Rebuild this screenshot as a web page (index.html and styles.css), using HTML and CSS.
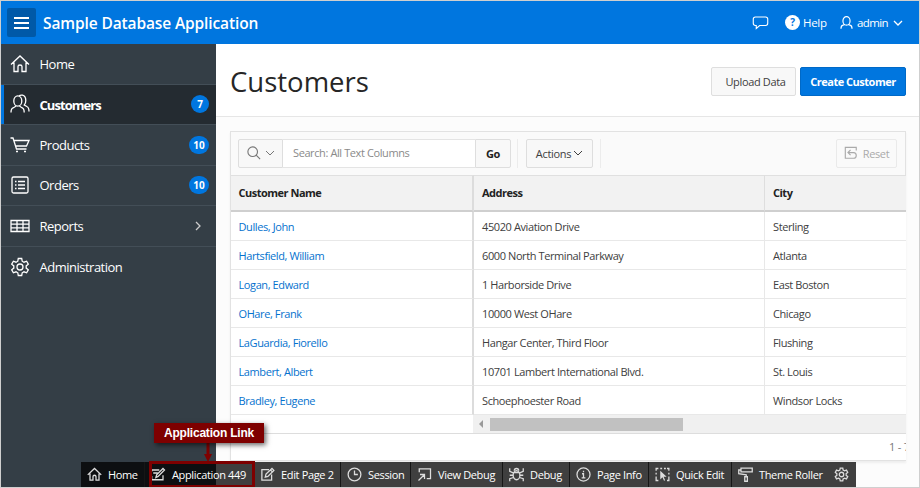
FILE: index.html
```
<!DOCTYPE html>
<html lang="en">
<head>
<meta charset="utf-8">
<title>Sample Database Application</title>
<link rel="stylesheet" href="styles.css">
</head>
<body>
<svg class="defs" aria-hidden="true">
  <symbol id="home" viewBox="0 0 20 20"><path d="M1 10.500 10 2l9 8.500M4 8.500V17.500h4V12.500q0-1.500 2-1.500t2 1.500v5h4V8.500"/></symbol>
  <symbol id="users" viewBox="0 0 20 20"><ellipse cx="7.800" cy="7" rx="4" ry="5.200"/><path d="M1 18.500q0-4 2.500-4.800L6.200 12M9.400 12l2.500 1.700q2.300.8 2.300 4.800M9 1.800q1.500-1 3.500-.6 3.300.8 3.300 5.300 0 2.700-1.500 4.500l2.500 1.500q2.200.8 2.200 5"/></symbol>
  <symbol id="user" viewBox="0 0 20 20"><ellipse cx="10" cy="7.500" rx="5.500" ry="6.500"/><path d="M1.500 19.500q0-4.500 3-5.400L7.500 13M12.500 13l3 1.100q3 .9 3 5.400"/></symbol>
  <symbol id="cart" viewBox="0 0 20 20"><path d="M.5 3H3l3.500 11h10M3.700 5.500H19L16.500 11H5.700"/><path d="M6 16.500h2M14 16.500h2"/></symbol>
  <symbol id="list" viewBox="0 0 20 20"><rect x="2" y="2" width="16" height="16" rx="1.500"/><path d="M5 6.500h1.500M8 6.500h7M5 10h1.500M8 10h7M5 13.500h1.500M8 13.500h7"/></symbol>
  <symbol id="table" viewBox="0 0 20 20"><path d="M1 4.500h18v11H1zM1 8.200h18M1 11.800h18M7 4.500v11M13 4.500v11"/></symbol>
  <symbol id="gear" viewBox="0 0 20 20"><path d="M8.300 1.500h3.400l.5 2.700 1.800 1 2.600-1 1.700 3-2.100 1.700v2.200l2.100 1.700-1.700 3-2.600-1-1.800 1-.5 2.700H8.300l-.5-2.700-1.800-1-2.600 1-1.700-3 2.100-1.700V8.900L1.700 7.200l1.700-3 2.600 1 1.800-1z"/><circle cx="10" cy="10" r="3"/></symbol>
  <symbol id="down" viewBox="0 0 10 10"><path d="m1 3 4 4 4-4"/></symbol>
  <symbol id="right" viewBox="0 0 10 10"><path d="m3 1 4 4-4 4"/></symbol>
  <symbol id="chat" viewBox="0 0 20 20"><path d="M4 3.500h12q2.500 0 2.500 2.500v5q0 2.500-2.500 2.500H9L5 17v-3.500H4Q1.500 13.500 1.500 11V6Q1.500 3.500 4 3.500z"/></symbol>
  <symbol id="search" viewBox="0 0 16 16"><circle cx="6.500" cy="6.500" r="5.500"/><path d="m10.500 10.500 4.500 4.500"/></symbol>
  <symbol id="reset" viewBox="0 0 16 16"><path d="M14 5V1.500H1.500V14H11q3 0 3-3.200T11 7.500H4.500M7.500 4.500l-3 3 3 3"/></symbol>
  <symbol id="appedit" viewBox="0 0 20 20"><path d="M1 4h10M1 4v2M3 8h6M1 12v5h15v-6M6.500 14l1-3.500L16 2l2 2-8.500 8.500z"/></symbol>
  <symbol id="edit" viewBox="0 0 20 20"><path d="M12 3.500H2.500v14h13V10M7 13.500l1-4 8-7.500 2.500 2.500-8 8zM14 4l2.500 2.500"/></symbol>
  <symbol id="clock" viewBox="0 0 20 20"><circle cx="10" cy="10" r="8.500"/><path d="M10 4.500V10h4.500"/></symbol>
  <symbol id="viewdebug" viewBox="0 0 20 20"><path d="M3 7V2.500h15v13h-5M4 10h6v6M10 10l-8 8"/></symbol>
  <symbol id="bug" viewBox="0 0 20 20"><ellipse cx="10" cy="11" rx="4.500" ry="6"/><path d="M6 7.500h8M7 5q0-3 3-3t3 3M1 1.500v4.300l4.700 2M19 1.500v4.300l-4.700 2M1 11h4.500M14.500 11H19M1 19v-3.500l5-1.500M19 19v-3.500L14 14"/></symbol>
  <symbol id="info" viewBox="0 0 20 20"><circle cx="10" cy="10" r="8.700"/><path d="M8 9h2v5M7.500 14.500h5M10 5v2"/></symbol>
  <symbol id="quick" viewBox="0 0 20 20"><path d="M1.500 5V2h3M7 2h2.500M12 2h2.500M16 2h2.500v3M18.500 7.500V10M18.500 12.500v5.500H16M1.500 7.500V10M1.500 12.500v5.500h3"/><path class="solid" d="m7 5 8.500 8h-4l2 4.500-1.500.7-2-4.500-3 2.800z"/></symbol>
  <symbol id="roller" viewBox="0 0 20 20"><path d="M4 1.500h15v5H4zM4 4H1v5l10 1.500V13M9 13h3.500v6H9z"/></symbol>
</svg>

<div class="app">
  <header class="topbar">
    <button class="menu" aria-label="Menu"><i></i><i></i><i></i></button>
    <span class="brand">Sample Database Application</span>
    <nav class="tools">
      <svg class="ico chat"><use href="#chat"/></svg>
      <span class="help"><b>?</b>Help</span>
      <span class="account"><svg class="ico"><use href="#user"/></svg><span>admin</span><svg class="caret"><use href="#down"/></svg></span>
    </nav>
  </header>
  <div class="body">
    <nav class="side">
      <a class="item"><svg class="ico"><use href="#home"/></svg><span>Home</span></a>
      <a class="item current"><svg class="ico"><use href="#users"/></svg><span>Customers</span><em class="round">7</em></a>
      <a class="item"><svg class="ico"><use href="#cart"/></svg><span>Products</span><em>10</em></a>
      <a class="item"><svg class="ico"><use href="#list"/></svg><span>Orders</span><em>10</em></a>
      <a class="item"><svg class="ico"><use href="#table"/></svg><span>Reports</span><svg class="caret"><use href="#right"/></svg></a>
      <a class="item"><svg class="ico"><use href="#gear"/></svg><span>Administration</span></a>
    </nav>
    <main class="main">
      <div class="title">
        <h1>Customers</h1>
        <button class="btn upload">Upload Data</button>
        <button class="btn primary">Create Customer</button>
      </div>
      <section class="report">
        <div class="controls">
          <button class="btn find"><svg class="glass"><use href="#search"/></svg><svg class="caret"><use href="#down"/></svg></button>
          <div class="field">Search: All Text Columns</div>
          <button class="btn go">Go</button>
          <div class="group"><button class="btn actions"><span>Actions</span><svg class="caret"><use href="#down"/></svg></button></div>
          <button class="btn reset"><svg class="back"><use href="#reset"/></svg><span>Reset</span></button>
        </div>
        <table class="grid">
          <colgroup><col class="c1"><col class="c2"><col class="c3"></colgroup>
          <thead><tr><th>Customer Name</th><th>Address</th><th>City</th></tr></thead>
          <tbody>
            <tr><td><a>Dulles, John</a></td><td>45020 Aviation Drive</td><td>Sterling</td></tr>
            <tr><td><a>Hartsfield, William</a></td><td>6000 North Terminal Parkway</td><td>Atlanta</td></tr>
            <tr><td><a>Logan, Edward</a></td><td>1 Harborside Drive</td><td>East Boston</td></tr>
            <tr><td><a>OHare, Frank</a></td><td>10000 West OHare</td><td>Chicago</td></tr>
            <tr><td><a>LaGuardia, Fiorello</a></td><td>Hangar Center, Third Floor</td><td>Flushing</td></tr>
            <tr><td><a>Lambert, Albert</a></td><td>10701 Lambert International Blvd.</td><td>St. Louis</td></tr>
            <tr><td><a>Bradley, Eugene</a></td><td>Schoephoester Road</td><td>Windsor Locks</td></tr>
          </tbody>
        </table>
        <div class="scroll"><div class="track"><i class="arrow"></i><i class="thumb"></i></div></div>
        <div class="pager"><span>1 - 7</span></div>
      </section>
    </main>
  </div>
  <footer class="devbar">
    <a class="d1"><svg class="ico"><use href="#home"/></svg><span>Home</span></a>
    <a class="d2"><svg class="ico"><use href="#appedit"/></svg><span>Application 449</span></a>
    <a class="d3"><svg class="ico"><use href="#edit"/></svg><span>Edit Page 2</span></a>
    <a class="d4"><svg class="ico"><use href="#clock"/></svg><span>Session</span></a>
    <a class="d5"><svg class="ico"><use href="#viewdebug"/></svg><span>View Debug</span></a>
    <a class="d6"><svg class="ico"><use href="#bug"/></svg><span>Debug</span></a>
    <a class="d7"><svg class="ico"><use href="#info"/></svg><span>Page Info</span></a>
    <a class="d8"><svg class="ico"><use href="#quick"/></svg><span>Quick Edit</span></a>
    <a class="d9"><svg class="ico"><use href="#roller"/></svg><span>Theme Roller</span></a>
    <a class="d10"><svg class="ico"><use href="#gear"/></svg></a>
  </footer>
  <div class="outline"></div>
  <svg class="pointer" viewBox="0 0 10 19"><path d="M3.500 0h3v11H9L5 19 1 11h2.500z"/></svg>
  <div class="callout">Application Link</div>
</div>
</body>
</html>
```
FILE: styles.css
```
* { box-sizing: border-box; }
body { margin: 0; font: 11px "Open Sans", "Noto Sans", sans-serif; color: #404040; letter-spacing: -.4px; }
button { font: inherit; letter-spacing: inherit; color: inherit; padding: 0; }
svg { fill: none; stroke: currentColor; stroke-width: 1.3; flex: none; }
.solid { fill: currentColor; stroke: none; }
.defs { position: absolute; width: 0; height: 0; }
.app { position: relative; width: 920px; height: 488px; overflow: hidden; border: 1px solid #cfcfcf; display: flex; flex-direction: column; background: #fcfcfc; }
.ico { width: 20px; height: 20px; }
.caret { width: 10px; height: 10px; }

.topbar { height: 43px; flex: none; background: #0076df; color: #fff; display: flex; align-items: center; padding: 0 16px 0 6px; }
.menu { width: 29px; height: 29px; border: 0; border-radius: 2px; background: #0059a8; display: flex; flex-direction: column; align-items: center; justify-content: center; gap: 3px; }
.menu i { width: 15px; height: 2px; background: #fff; }
.brand { margin-left: 7px; font-size: 15.500px; font-weight: 600; letter-spacing: -.12px; white-space: nowrap; }
.tools { margin-left: auto; display: flex; align-items: center; font-size: 11.500px; letter-spacing: -.6px; }
.chat { width: 17px; height: 17px; margin-right: 16px; }
.help { display: flex; align-items: center; width: 55px; letter-spacing: -.3px; }
.help b { width: 15px; height: 15px; border-radius: 50%; background: #fff; color: #0076df; font-size: 10px; line-height: 15px; text-align: center; margin-right: 3px; }
.account { display: flex; align-items: center; }
.account .ico { width: 13px; height: 13px; stroke-width: 1.800; margin-right: 4px; }
.account .caret { margin-left: 5px; }

.body { flex: 1; display: flex; min-height: 0; }
.side { width: 215px; flex: none; background: #343e46; color: #fff; font-size: 13px; display: flex; flex-direction: column; }
.item { height: 40.500px; flex: none; border-bottom: 1px solid #434e57; display: flex; align-items: center; padding: 0 7px 0 9px; }
.item:last-child { border-bottom: 0; }
.item > span { margin-left: 9.500px; margin-right: auto; letter-spacing: -.5px; }
.item.current { background: #242b31; font-weight: 700; box-shadow: inset 3px 0 #0076df; }
.item.current > span { letter-spacing: -.95px; padding-top: 1px; }
.item em { font-style: normal; font-size: 10px; font-weight: 700; letter-spacing: 0; background: #0076df; width: 20px; height: 18px; line-height: 18px; border-radius: 9px; text-align: center; }
.item em.round { width: 18px; }
.item .caret { margin-right: 6px; color: #ccc; }

.main { flex: 1; min-width: 0; }
.title { height: 73px; background: #fff; border-bottom: 1px solid #e6e6e6; display: flex; align-items: center; padding: 3px 13px 0 14px; }
h1 { margin: 0 auto 0 0; font-size: 27.500px; font-weight: 400; line-height: 40px; color: #262626; letter-spacing: 0; }
.btn { border: 1px solid #dedede; border-radius: 2px; background: #f8f8f8; height: 29px; display: flex; align-items: center; justify-content: center; }
.upload { width: 85px; margin-right: 4px; padding-left: 4px; letter-spacing: -.35px; }
.primary { width: 106px; background: #0076df; border-color: #0069c7; color: #fff; font-weight: 700; letter-spacing: -.5px; }

.report { width: 676px; height: 330px; margin: 14px 0 0 14px; background: #fff; border: 1px solid #e2e2e2; border-right: 0; overflow: hidden; box-shadow: 0 2px 2px #eee; }
.controls { height: 43px; background: #fafafa; border-right: 1px solid #e2e2e2; padding: 0 8px 0 7px; display: flex; align-items: center; }
.controls .btn { padding-bottom: 1px; }
.find { width: 45px; gap: 4px; color: #777; border-radius: 2px 0 0 2px; }
.glass { width: 14px; height: 14px; }
.field { width: 192px; height: 29px; line-height: 26px; border: 1px solid #e4e4e4; border-width: 1px 0; background: #fff; padding-left: 10px; color: #8a8a8a; }
.go { width: 36px; font-weight: 700; border-radius: 0 2px 2px 0; color: #222; }
.group { height: 29px; margin-left: 6px; padding: 0 7px 0 8px; border: solid #ececec; border-width: 0 1px; }
.actions { width: 67px; gap: 2px; letter-spacing: -.3px; }
.actions .caret, .find .caret { stroke-width: 1; }
.reset { width: 61px; margin-left: auto; gap: 5px; color: #aaa; border-color: #eaeaea; background: #fafafa; }
.back { width: 14px; height: 14px; }

.grid { width: 675px; table-layout: fixed; border-collapse: separate; border-spacing: 0; }
.c1 { width: 243px; }
.c2 { width: 291px; }
.grid th { height: 37px; padding: 0 8px 2px; text-align: left; background: #f2f2f2; color: #222; letter-spacing: -.5px; border-top: 1px solid #e0e0e0; border-bottom: 2px solid #cfcfcf; border-right: 1px solid #dedede; }
.grid td { height: 29px; padding: 1px 8px 0; border-bottom: 1px solid #e8e8e8; border-right: 1px solid #e8e8e8; }
.grid th:first-child, .grid td:first-child { border-right: 2px solid #dcdcdc; padding-left: 7.500px; }
.grid th:last-child, .grid td:last-child { border-right: 0; }
.grid a { color: #0572ce; }
.scroll { height: 19px; border-bottom: 1px solid #ddd; display: flex; justify-content: flex-end; }
.track { width: 433px; background: #f0f0f0; display: flex; align-items: center; }
.arrow { margin: 0 7px 0 6px; border: solid transparent; border-width: 4px 4px 4px 0; border-right-color: #999; }
.thumb { width: 193px; height: 13px; background: #c1c1c1; }
.pager { padding: 5px 0 0 658px; white-space: nowrap; color: #777; letter-spacing: -.2px; }

.devbar { position: absolute; left: 80px; bottom: 0; height: 25px; display: flex; background: rgba(0, 0, 0, .75); color: #fff; letter-spacing: -.35px; }
.devbar a { display: flex; align-items: center; padding-left: 6px; border-right: 1px solid #161616; white-space: nowrap; }
.devbar .ico { width: 15px; height: 15px; stroke-width: 1.700; color: #ddd; margin-right: 6px; }
.devbar .d9, .devbar .d10 { border: 0; }
.d1 { width: 64px; } .d2 { width: 109px; } .d3 { width: 87px; } .d4 { width: 70px; }
.d5 { width: 92px; } .d6 { width: 67px; } .d7 { width: 79px; } .d8 { width: 83px; }
.d9 { width: 96px; } .d10 { width: 28px; }

.outline { position: absolute; left: 148px; top: 460px; width: 106px; height: 27px; border: 3px solid #7e0000; }
.pointer { position: absolute; left: 202px; top: 442px; width: 10px; height: 19px; fill: #7e0000; stroke: none; }
.callout { position: absolute; left: 153px; top: 422px; width: 110px; height: 20px; background: #7e0000; color: #fff; font: bold 12px/20px "Liberation Sans", sans-serif; letter-spacing: -.2px; text-align: center; box-shadow: 2px 2px 5px rgba(0, 0, 0, .6); }
```
